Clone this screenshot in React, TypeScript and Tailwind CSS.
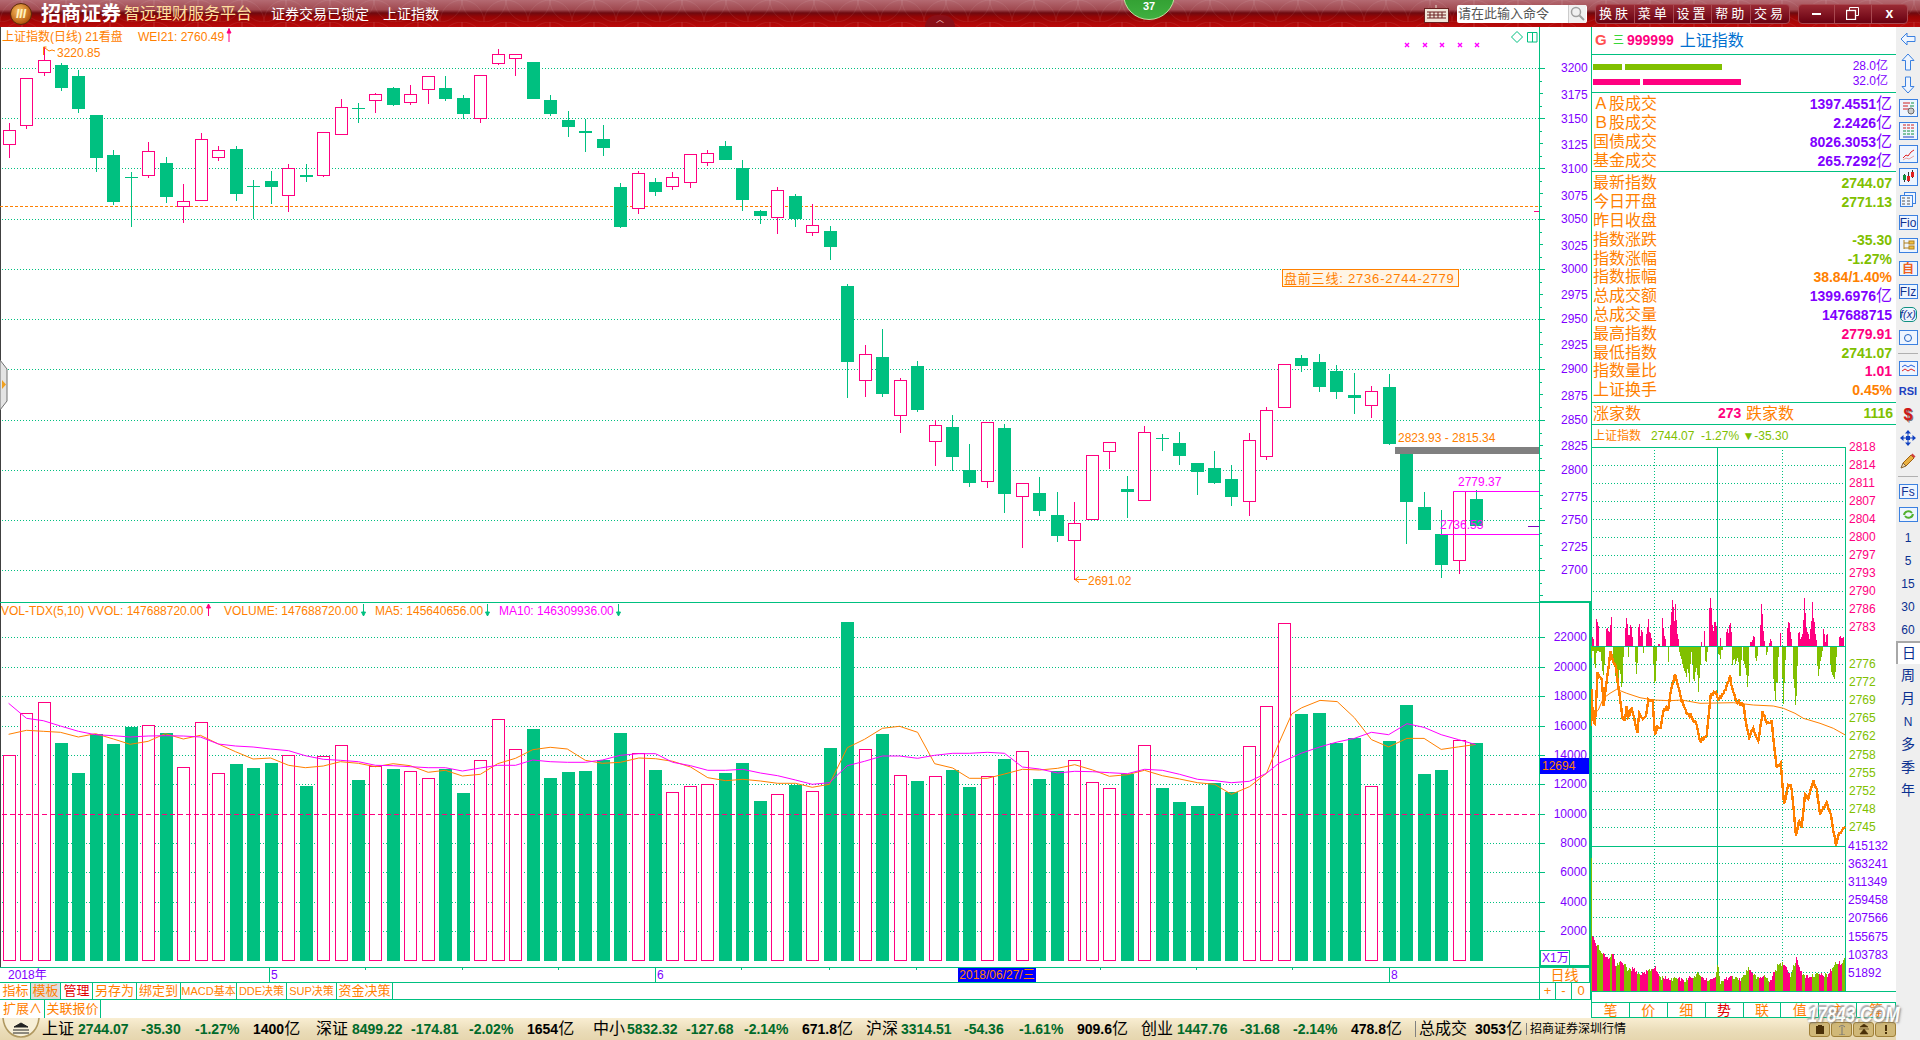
import React from 'react';

const GREEN = '#00c080';
const PINK = '#ff0080';
const ORANGE = '#ff8000';
const PURPLE = '#8000ff';
const MAGENTA = '#ff00ff';
const OLIVE = '#80c000';

type Raw = [number, number, number, number, number];

// up?, high, body top, body bottom, low (raw values are crop coordinates)
const seg1: Raw[] = [
  [1, 370, 391, 431, 473], [1, 235, 235, 374, 387], [1, 140, 181, 215, 228], [0, 190, 195, 264, 272],
  [0, 210, 228, 327, 338], [0, 345, 345, 474, 515], [0, 450, 465, 606, 614], [0, 517, 531, 534, 680],
  [1, 426, 454, 524, 533], [0, 471, 489, 591, 608], [1, 552, 604, 618, 668], [1, 399, 418, 599, 599],
  [1, 438, 451, 470, 482], [0, 438, 447, 582, 602], [0, 541, 558, 561, 657], [0, 513, 543, 561, 612],
  [1, 492, 505, 584, 635], [0, 492, 525, 531, 545], [1, 397, 397, 524, 530], [1, 297, 322, 401, 401],
  [0, 310, 324, 327, 368], [1, 279, 283, 299, 339], [0, 262, 264, 315, 317], [1, 255, 283, 305, 315],
  [1, 229, 229, 266, 312], [0, 228, 264, 297, 303], [0, 285, 294, 342, 358], [1, 226, 226, 353, 369],
  [1, 147, 163, 188, 194], [1, 163, 163, 173, 228], [0, 186, 186, 297, 297], [0, 285, 300, 342, 348],
  [0, 333, 360, 381, 411], [0, 357, 393, 398, 456], [0, 375, 417, 444, 468], [0, 549, 561, 681, 683],
  [1, 514, 519, 624, 642],
];
const seg2: Raw[] = [
  [0, 178, 182, 192, 196], [1, 172, 177, 186, 190], [1, 154, 154, 182, 188], [1, 150, 153, 162, 166],
  [0, 141, 146, 160, 160], [0, 160, 168, 200, 211], [0, 210, 211, 216, 224], [1, 187, 190, 217, 234],
  [0, 194, 196, 219, 227], [1, 204, 225, 232, 236],
];
const seg3: Raw[] = [
  [0, -12, 3, 50, 90], [0, 162, 168, 396, 503], [1, 345, 373, 449, 500], [0, 297, 381, 492, 500],
  [1, 444, 451, 554, 608], [0, 393, 408, 540, 546], [1, 570, 586, 632, 708], [0, 555, 591, 681, 722],
  [0, 642, 720, 759, 771], [1, 577, 577, 752, 774], [0, 582, 594, 792, 849], [1, 760, 760, 797, 954],
  [0, 741, 789, 843, 858], [0, 786, 855, 918, 936], [1, 816, 880, 929, 1050], [1, 676, 676, 866, 866],
  [1, 637, 637, 662, 717], [0, 738, 777, 786, 864], [1, 588, 607, 809, 809], [0, 612, 624, 627, 663],
  [0, 606, 639, 678, 705], [0, 699, 699, 726, 795], [0, 663, 714, 759, 762], [0, 705, 747, 801, 828],
  [1, 609, 631, 812, 858], [1, 531, 541, 677, 690], [1, 403, 403, 532, 532],
];
const seg4: Raw[] = [
  [0, 355, 358, 366, 372], [0, 354, 362, 387, 392], [0, 365, 371, 392, 399], [0, 373, 395, 398, 414],
  [1, 386, 391, 405, 418], [0, 374, 387, 444, 445], [0, 452, 452, 502, 544], [0, 492, 507, 530, 530],
  [0, 510, 534, 565, 578], [1, 491, 491, 560, 574], [0, 490, 499, 526, 526],
];
const candles: Raw[] = [
  ...seg1.map((c): Raw => [c[0], c[1] / 3, c[2] / 3, c[3] / 3, c[4] / 3]),
  ...seg2,
  ...seg3.map((c): Raw => [c[0], 230 + c[1] / 3, 230 + c[2] / 3, 230 + c[3] / 3, 230 + c[4] / 3]),
  ...seg4,
];
const cx = (i: number) => Math.round(8.6 + 17.47 * i);

const volA = [496, 370, 337, 459, 549, 432, 462, 411, 406, 429, 532, 397, 550, 522, 534, 519, 496, 588, 499, 466, 570, 527, 537, 544, 565, 537, 609, 511, 388, 478, 417, 564, 546, 543, 510, 429, 490];
const volB = [510, 577, 559, 553, 519, 489, 603, 583, 555, 574, 444, 66, 448, 402, 526, 543, 529, 510, 561, 529, 477, 454, 537, 513, 481, 547, 565, 522, 436, 564, 606, 618, 549, 576, 439, 319, 70];
const volC = [714, 713, 743, 738, 786, 741, 705, 774, 770, 740, 743];
const volTops = [...volA.map((y) => 590 + y / 3), ...volB.map((y) => 600 + y / 3), ...volC];

const pts = (a: number[], ox: number, oy: number) => {
  const out: string[] = [];
  for (let k = 0; k < a.length; k += 2) out.push(`${(ox + a[k] / 2.45).toFixed(1)},${(oy + a[k + 1] / 3).toFixed(1)}`);
  return out.join(' ');
};
const over = (a: number[]) => {
  const out: string[] = [];
  for (let k = 0; k < a.length; k += 2) out.push(`${(a[k] * 1.2245).toFixed(1)},${(a[k + 1] * 1.2245).toFixed(1)}`);
  return out.join(' ');
};

const ma5 = [
  pts([21, 433, 65, 421, 106, 424, 148, 427, 192, 441, 234, 431, 278, 447, 319, 463, 363, 454, 405, 431, 449, 447, 491, 436, 535, 462, 577, 485, 620, 507, 663, 504, 707, 526, 748, 533, 792, 528, 834, 515, 878, 520, 920, 530, 963, 521, 1005, 527, 1049, 547, 1091, 541, 1133, 558, 1177, 553, 1219, 521, 1263, 505, 1305, 479, 1348, 472, 1390, 477, 1434, 511, 1476, 520, 1520, 517, 1565, 504], 0, 590),
  pts([38, 476, 80, 484, 124, 501, 166, 533, 210, 542, 252, 538, 295, 543, 337, 550, 381, 550, 422, 562, 464, 553, 508, 443, 550, 418, 594, 385, 636, 379, 680, 397, 722, 491, 766, 504, 807, 535, 851, 535, 893, 522, 937, 508, 979, 510, 1023, 505, 1065, 494, 1109, 510, 1150, 529, 1194, 524, 1236, 511, 1280, 527, 1322, 537, 1366, 548, 1408, 553, 1449, 583, 1493, 560, 1535, 520, 1565, 430], 640, 600),
  over([1055, 583, 1063, 578, 1078, 572, 1092, 573, 1106, 586, 1120, 604, 1134, 610, 1149, 603, 1163, 603, 1177, 612, 1191, 610, 1205, 608]),
].join(' ');
const ma10 = [
  pts([21, 340, 65, 385, 106, 392, 148, 408, 192, 424, 234, 434, 278, 437, 319, 441, 363, 438, 405, 437, 449, 438, 491, 441, 535, 462, 577, 468, 620, 471, 663, 477, 707, 482, 748, 497, 792, 508, 834, 511, 878, 515, 920, 526, 963, 527, 1005, 530, 1049, 533, 1091, 533, 1133, 543, 1177, 534, 1219, 526, 1263, 526, 1305, 510, 1348, 515, 1390, 517, 1434, 517, 1476, 510, 1520, 496, 1565, 491], 0, 590),
  pts([38, 461, 80, 487, 124, 497, 166, 511, 210, 511, 252, 508, 295, 519, 337, 527, 381, 540, 422, 553, 464, 548, 508, 497, 550, 484, 594, 468, 636, 468, 680, 475, 722, 466, 766, 460, 807, 460, 851, 457, 893, 460, 937, 501, 979, 507, 1023, 519, 1065, 514, 1109, 515, 1150, 518, 1194, 521, 1236, 508, 1280, 511, 1322, 523, 1366, 538, 1408, 542, 1449, 548, 1493, 544, 1535, 520, 1565, 490], 640, 600),
  over([1063, 615, 1078, 610, 1092, 606, 1106, 603, 1120, 598, 1134, 600, 1149, 591, 1163, 594, 1177, 600, 1191, 604, 1205, 608]),
].join(' ');

const priceLabels: [string, number][] = [
  ['3200', 68], ['3175', 95], ['3150', 119], ['3125', 145], ['3100', 169], ['3075', 196], ['3050', 219], ['3025', 246], ['3000', 269],
  ['2975', 295], ['2950', 319], ['2925', 345], ['2900', 369], ['2875', 396], ['2850', 420], ['2825', 446], ['2800', 470], ['2775', 497],
  ['2750', 520], ['2725', 547], ['2700', 570],
];
const mainGrid = [68, 118, 168, 219, 269, 319, 369, 420, 470, 520, 570];
const volGrid: [string, number][] = [
  ['22000', 637], ['20000', 667], ['18000', 696], ['16000', 726], ['14000', 755], ['12000', 784], ['10000', 814],
  ['8000', 843], ['6000', 872], ['4000', 902], ['2000', 931],
];

const MainChart = () => (
  <div className="relative h-[576px] w-[1591px] shrink-0">
    <svg viewBox="0 27 1591 576" width={1591} height={576} className="block" shapeRendering="crispEdges" fontSize={12}>
      <line x1={0.5} y1={27} x2={0.5} y2={603} stroke="#404040" />
      {mainGrid.map((y) => (
        <line key={y} x1={2} y1={y + 0.5} x2={1539} y2={y + 0.5} stroke={GREEN} strokeDasharray="1 2" />
      ))}
      <line x1={0} y1={206.5} x2={1539} y2={206.5} stroke={ORANGE} strokeDasharray="3 2" />
      <line x1={1534} y1={211.5} x2={1539} y2={211.5} stroke={PINK} />
      {candles.map((c, i) => {
        const x = cx(i);
        const color = c[0] ? PINK : GREEN;
        const top = Math.round(c[2]);
        const bot = Math.round(c[3]);
        return (
          <g key={i}>
            <line x1={x + 0.5} y1={c[1]} x2={x + 0.5} y2={c[4]} stroke={color} />
            {c[0] ? (
              <rect x={x - 6 + 0.5} y={top + 0.5} width={12} height={bot - top} fill="#fff" stroke={color} />
            ) : (
              <rect x={x - 6} y={top} width={13} height={Math.max(bot - top, 1)} fill={color} />
            )}
          </g>
        );
      })}
      <rect x={1395} y={447} width={144} height={7} fill="#808080" />
      <line x1={1453} y1={491.5} x2={1539} y2={491.5} stroke={MAGENTA} />
      <line x1={1440} y1={534.5} x2={1539} y2={534.5} stroke={MAGENTA} />
      <line x1={1528} y1={526.5} x2={1539} y2={526.5} stroke="#8000c0" />
      <line x1={1539.5} y1={27} x2={1539.5} y2={603} stroke={GREEN} />
      <line x1={0} y1={602.5} x2={1539} y2={602.5} stroke={GREEN} />
      <rect x={1539} y={601} width={52} height={3} fill={GREEN} />
      {mainGrid.map((y) => (
        <g key={y}>
          <line x1={1539} y1={y + 0.5} x2={1545} y2={y + 0.5} stroke={GREEN} />
          <line x1={1539} y1={y + 13.5} x2={1542} y2={y + 13.5} stroke={GREEN} />
          <line x1={1539} y1={y + 25.5} x2={1543} y2={y + 25.5} stroke={GREEN} />
          <line x1={1539} y1={y + 38.5} x2={1542} y2={y + 38.5} stroke={GREEN} />
        </g>
      ))}
      <g shapeRendering="auto">
        {priceLabels.map(([t, y]) => (
          <text key={t} x={1561} y={y + 4} fill={PURPLE}>{t}</text>
        ))}
        <text x={2} y={41} fill={ORANGE}>上证指数(日线) 21看盘</text>
        <text x={138} y={41} fill={ORANGE}>WEI21: 2760.49</text>
        <path d="M229 28v14M227 33l2-4 2 4z" stroke={PINK} fill={PINK} />
        <path d="M43.5 55v-8h3M45 48l4 3 3-1 3 1" stroke={ORANGE} fill="none" />
        <text x={57} y={57} fill={ORANGE}>3220.85</text>
        {[1407, 1425, 1442, 1460, 1477].map((x) => (
          <path key={x} d={`M${x - 2} 43l4 4M${x + 2} 43l-4 4`} stroke={MAGENTA} strokeWidth={1.4} />
        ))}
        <path d="M1517 31.5l5.5 5.5-5.5 5.5-5.5-5.5z" fill="none" stroke={GREEN} />
        <path d="M1527.5 32.5h9.5v9.5h-9.5zM1532.5 32.5v9.5" fill="none" stroke={GREEN} />
        <rect x={1282.5} y={269.5} width={176} height={17} fill="#fff5e6" stroke={ORANGE} />
        <text x={1284} y={283} fill={ORANGE} fontSize={13} letterSpacing={0.8}>盘前三线: 2736-2744-2779</text>
        <text x={1398} y={442} fill={ORANGE}>2823.93 - 2815.34</text>
        <text x={1458} y={486} fill={MAGENTA}>2779.37</text>
        <text x={1440} y={529} fill={MAGENTA}>2736.53</text>
        <path d="M1075 579.5h12M1075 579.5l4-3M1075 579.5l4 3" stroke={ORANGE} fill="none" />
        <text x={1088} y={585} fill={ORANGE}>2691.02</text>
        <path d="M0 360l7 9v32l-7 9z" fill="#e4e4e4" stroke="#707070" />
        <path d="M2 380l4 4.500-4 4.500z" fill="#f0a020" />
      </g>
    </svg>
  </div>
);

const VolChart = () => (
  <div className="relative h-[364px] w-[1591px] shrink-0">
    <svg viewBox="0 603 1591 364" width={1591} height={364} className="block" shapeRendering="crispEdges" fontSize={12}>
      <line x1={0.5} y1={603} x2={0.5} y2={967} stroke="#404040" />
      {volGrid.map(([t, y]) =>
        y === 814 ? (
          <line key={t} x1={2} y1={y + 0.5} x2={1539} y2={y + 0.5} stroke={PINK} strokeDasharray="5 3" />
        ) : (
          <line key={t} x1={2} y1={y + 0.5} x2={1539} y2={y + 0.5} stroke={GREEN} strokeDasharray="1 2" />
        ),
      )}
      {volTops.map((t, i) => {
        const x = cx(i);
        const top = Math.round(t);
        return candles[i][0] ? (
          <rect key={i} x={x - 6 + 0.5} y={top + 0.5} width={12} height={960 - top} fill="#fff" stroke={PINK} />
        ) : (
          <rect key={i} x={x - 6} y={top} width={13} height={961 - top} fill={GREEN} />
        );
      })}
      <line x1={2} y1={814.5} x2={1539} y2={814.5} stroke={PINK} strokeDasharray="5 3" />
      <g shapeRendering="auto" fill="none">
        <polyline points={ma5} stroke={ORANGE} />
        <polyline points={ma10} stroke={MAGENTA} />
      </g>
      <line x1={1539.5} y1={603} x2={1539.5} y2={967} stroke={GREEN} />
      <rect x={1589} y={603} width={2} height={364} fill={GREEN} />
      {volGrid.map(([t, y]) => (
        <line key={t} x1={1539} y1={y + 0.5} x2={1545} y2={y + 0.5} stroke={GREEN} />
      ))}
      <g shapeRendering="auto">
        {volGrid.map(([t, y]) => (
          <text key={t} x={1587} y={y + 4} textAnchor="end" fill={PURPLE}>{t}</text>
        ))}
        <text x={1} y={615} fill={ORANGE}>VOL-TDX(5,10)</text>
        <text x={88} y={615} fill={ORANGE}>VVOL: 147688720.00</text>
        <path d="M208.500 604v12M206.500 608l2-4 2 4z" stroke={PINK} fill={PINK} />
        <text x={224} y={615} fill={ORANGE}>VOLUME: 147688720.00</text>
        <path d="M363.500 604v12M361.500 612l2 4 2-4z" stroke={GREEN} fill={GREEN} />
        <text x={375} y={615} fill={ORANGE}>MA5: 145640656.00</text>
        <path d="M487.500 604v12M485.500 612l2 4 2-4z" stroke={GREEN} fill={GREEN} />
        <text x={499} y={615} fill={MAGENTA}>MA10: 146309936.00</text>
        <path d="M618.500 604v12M616.500 612l2 4 2-4z" stroke={GREEN} fill={GREEN} />
      </g>
      <rect x={1540} y={758} width={49} height={16} fill="#0000ff" />
      <text x={1542} y={770} fill={ORANGE} shapeRendering="auto">12694</text>
      <rect x={1540.5} y={950.5} width={29} height={15} fill="#fff" stroke={GREEN} />
      <text x={1542} y={962} fill={PURPLE} shapeRendering="auto">X1万</text>
      <rect x={1539} y={965} width={52} height={2} fill={GREEN} />
    </svg>
  </div>
);

const DateRow = () => (
  <div className="flex h-[16px] w-[1591px] shrink-0 border-t border-b border-[#00c080] text-[12px] leading-[14px]">
    <div className="relative w-[1540px] border-r border-[#00c080] text-[#8000ff]">
      <span className="absolute left-[8px] top-0">2018年</span>
      <span className="absolute left-[269px] top-0 h-full border-l border-[#00c080] pl-[1px]">5</span>
      <span className="absolute left-[655px] top-0 h-full border-l border-[#00c080] pl-[1px]">6</span>
      <span className="absolute left-[1389px] top-0 h-full border-l border-[#00c080] pl-[1px]">8</span>
      <span className="absolute left-[365px] top-0 h-[2px] w-px bg-[#00c080]" />
      <span className="absolute left-[462px] top-0 h-[2px] w-px bg-[#00c080]" />
      <span className="absolute left-[558px] top-0 h-[2px] w-px bg-[#00c080]" />
      <span className="absolute left-[741px] top-0 h-[2px] w-px bg-[#00c080]" />
      <span className="absolute left-[829px] top-0 h-[2px] w-px bg-[#00c080]" />
      <span className="absolute left-[916px] top-0 h-[2px] w-px bg-[#00c080]" />
      <span className="absolute left-[1100px] top-0 h-[2px] w-px bg-[#00c080]" />
      <span className="absolute left-[1196px] top-0 h-[2px] w-px bg-[#00c080]" />
      <span className="absolute left-[1292px] top-0 h-[2px] w-px bg-[#00c080]" />
      <span className="absolute left-[958px] top-0 flex h-full w-[78px] items-center justify-center bg-[#0000ff] text-[#ff8000]">2018/06/27/三</span>
    </div>
    <div className="flex w-[49px] items-center justify-center text-[14px] text-[#ff8000]">日线</div>
    <div className="w-[2px] bg-[#00c080]" />
  </div>
);

const tabs = [
  { t: '指标', c: 'w-[30px] text-[#ff8000]' },
  { t: '模板', c: 'w-[30px] bg-[#dedede] text-[#ff8000]' },
  { t: '管理', c: 'w-[32px] text-[#e00000]' },
  { t: '另存为', c: 'w-[44px] text-[#ff8000]' },
  { t: '绑定到', c: 'w-[44px] text-[#ff8000]' },
  { t: 'MACD基本', c: 'w-[56px] text-[#ff8000] text-[11px]' },
  { t: 'DDE决策', c: 'w-[50px] text-[#ff8000] text-[11px]' },
  { t: 'SUP决策', c: 'w-[50px] text-[#ff8000] text-[11px]' },
  { t: '资金决策', c: 'w-[56px] text-[#ff8000]' },
];

const TabRows = () => (
  <>
    <div className="flex h-[17px] w-[1591px] shrink-0 border-b border-[#00c080] text-[13px] leading-[16px]">
      <div className="w-px" />
      {tabs.map((b) => (
        <div key={b.t} className={`flex items-center justify-center whitespace-nowrap border-r border-[#00c080] ${b.c}`}>{b.t}</div>
      ))}
      <div className="flex-1 border-r border-[#00c080]" />
      <div className="flex w-[50px] text-[#ff8000]">
        <div className="flex w-[16px] items-center justify-center border-r border-[#00c080]">+</div>
        <div className="flex w-[16px] items-center justify-center border-r border-[#00c080]">-</div>
        <div className="flex w-[18px] items-center justify-center">0</div>
      </div>
      <div className="w-px bg-[#00c080]" />
    </div>
    <div className="flex h-[18px] w-[1591px] shrink-0 text-[13px] leading-[16px] text-[#ff8000]">
      <div className="w-px" />
      <div className="flex w-[44px] items-center justify-center border-r border-[#00c080]">扩展∧</div>
      <div className="flex w-[56px] items-center justify-center border-r border-[#00c080]">关联报价</div>
    </div>
  </>
);

const Row = ({ label, value, c, yi }: { label: string; value: string; c?: string; yi?: boolean }) => (
  <div className="flex h-[18.8px] items-center justify-between whitespace-nowrap pr-[4px]">
    <span className="text-[16px] leading-none text-[#ff8000]">{label}</span>
    <span className={`text-[14px] leading-none font-bold ${c}`}>
      {value}
      {yi && <span className="text-[16px] font-normal">亿</span>}
    </span>
  </div>
);

// intraday bars in crop coordinates
const pinkAreas = [
  [97, 528, 101, 540], [108, 480, 111, 472, 114, 500, 117, 495], [138, 510, 143, 505, 148, 520, 152, 490, 154, 450, 156, 520],
  [196, 510, 198, 490, 201, 460, 204, 520, 208, 530, 212, 490, 216, 510, 218, 540], [233, 520, 238, 480, 241, 530, 245, 508, 249, 520],
  [258, 530, 262, 510, 265, 465, 268, 515, 272, 520, 276, 545], [295, 552, 300, 552], [305, 500, 308, 470, 312, 525, 318, 540],
  [329, 520, 333, 480, 337, 420, 340, 425, 343, 500, 346, 420, 349, 470, 352, 520, 357, 545], [424, 545, 426, 545], [432, 513, 434, 513],
  [447, 470, 450, 420, 453, 408, 456, 480, 460, 520, 464, 480, 468, 490, 472, 510], [480, 533, 482, 533],
  [497, 530, 502, 505, 506, 520, 510, 480, 513, 500, 517, 540], [570, 540, 573, 550, 578, 540, 582, 520, 586, 545],
  [600, 530, 603, 460, 605, 420, 608, 470, 612, 540, 616, 550], [628, 550, 632, 535, 636, 550], [660, 518, 662, 518],
  [680, 530, 684, 490, 688, 483, 691, 510, 695, 540],
  [715, 520, 718, 510, 722, 540, 728, 520, 731, 470, 734, 402, 737, 470, 740, 510, 745, 520, 749, 540, 752, 500, 755, 480, 757, 415, 760, 470, 764, 490, 767, 530, 771, 545],
  [790, 507, 793, 507, 795, 555, 800, 520, 802, 512, 805, 555], [838, 530, 842, 528, 846, 540, 850, 528, 853, 545],
];
const greenAreas = [
  [93, 605, 97, 575, 100, 565, 104, 620, 107, 625, 110, 570, 117, 575, 122, 575, 126, 620, 130, 650, 134, 610, 136, 565],
  [160, 600, 164, 625, 168, 660, 172, 680, 176, 650, 180, 620, 184, 680, 187, 690, 190, 600, 192, 565], [204, 590, 206, 590], [218, 590, 220, 590],
  [225, 590, 228, 620, 230, 648, 233, 600], [250, 580, 252, 580], [280, 600, 283, 660, 285, 685, 288, 640, 291, 565], [296, 590, 298, 590],
  [305, 590, 307, 590], [324, 605, 326, 605],
  [358, 575, 365, 600, 372, 630, 376, 635, 380, 655, 384, 610, 388, 680, 391, 620, 395, 570, 398, 620, 402, 680, 406, 640, 410, 620, 414, 660, 416, 710, 419, 640, 424, 590],
  [436, 600, 439, 612, 443, 570], [473, 600, 477, 570, 481, 605, 484, 570, 490, 570], [517, 620, 522, 590, 527, 615, 532, 590, 536, 610, 540, 670, 544, 610, 547, 570],
  [550, 600, 556, 620, 560, 650, 564, 698, 567, 600], [585, 590, 590, 605, 595, 570], [618, 590, 624, 570], [640, 650, 644, 700, 647, 730, 650, 650, 653, 675, 656, 570],
  [665, 620, 668, 660, 671, 750, 674, 650, 678, 570], [700, 650, 704, 690, 707, 745, 710, 700, 714, 570], [772, 610, 776, 655, 780, 610, 785, 590, 789, 565],
  [810, 600, 815, 640, 820, 650, 825, 660, 829, 600, 832, 565],
];
const zx = (x: number) => 1560 + x / 3;
const zy = (y: number) => 460 + y / 3;
const areaPath = (a: number[]) => {
  let d = `M${zx(a[0]).toFixed(1)} 646`;
  for (let k = 0; k < a.length; k += 2) d += `L${zx(a[k]).toFixed(1)} ${zy(a[k + 1]).toFixed(1)}`;
  return `${d}L${zx(a[a.length - 2]).toFixed(1)} 646Z`;
};
const linePts = (a: number[]) => {
  const o: string[] = [];
  for (let k = 0; k < a.length; k += 2) o.push(`${zx(a[k]).toFixed(1)},${zy(a[k + 1]).toFixed(1)}`);
  return o.join(' ');
};
// the price line is jagged in the picture, add a small fixed jitter
const jagged = (a: number[]) => {
  const o: number[] = [];
  let seed = 777;
  for (let k = 0; k < a.length - 2; k += 2) {
    const n = Math.max(1, Math.floor((a[k + 2] - a[k]) / 3));
    for (let j = 0; j < n; j++) {
      seed = (seed * 1103515245 + 12345) & 0x7fffffff;
      const t = j / n;
      o.push(a[k] + t * (a[k + 2] - a[k]), a[k + 1] + t * (a[k + 3] - a[k + 1]) + (seed / 0x7fffffff - 0.5) * 10);
    }
  }
  o.push(a[a.length - 2], a[a.length - 1]);
  return linePts(o);
};
const priceLine = jagged([
  91, 805, 94, 690, 99, 780, 105, 790, 113, 635, 120, 650, 125, 655, 131, 735, 140, 660, 152, 575, 160, 610, 168, 620, 178, 700, 188, 775, 195, 780, 200, 742,
  205, 775, 215, 742, 222, 775, 232, 820, 238, 760, 248, 775, 258, 770, 265, 722, 278, 725, 285, 825, 292, 800, 302, 805, 310, 750, 325, 745, 335, 680, 345, 645,
  355, 680, 365, 720, 380, 760, 395, 770, 410, 795, 420, 848, 440, 825, 452, 705, 468, 692, 475, 720, 490, 703, 510, 650, 518, 690, 530, 725, 550, 735, 560, 800,
  568, 830, 580, 805, 595, 840, 608, 755, 620, 790, 635, 785, 642, 850, 650, 920, 662, 910, 672, 1035, 685, 975, 695, 985, 708, 1130, 715, 1085, 725, 1095, 735, 1005,
  745, 1015, 760, 965, 770, 990, 780, 1060, 800, 1030, 815, 1075, 820, 1110, 828, 1152, 840, 1115, 856, 1105,
]);
const avgLine = linePts([93, 770, 115, 750, 130, 715, 150, 700, 170, 688, 200, 700, 240, 713, 280, 720, 330, 722, 365, 720, 420, 730, 520, 728, 580, 735, 640, 738, 670, 745, 705, 760, 730, 775, 780, 790, 820, 805, 856, 825]);

const envelope = [93, 115, 96, 348, 110, 365, 125, 390, 140, 410, 157, 390, 165, 425, 190, 420, 200, 440, 220, 440, 240, 460, 283, 435, 300, 465, 330, 470, 350, 465, 370, 475, 415, 455, 440, 475, 465, 470, 472, 418, 480, 480, 515, 465, 545, 470, 565, 435, 590, 470, 610, 460, 630, 475, 652, 430, 672, 420, 690, 460, 708, 410, 730, 462, 770, 458, 800, 460, 825, 425, 850, 418, 856, 380];
const intradayVol = (() => {
  const out: { x: number; y: number; c: string }[] = [];
  let seed = 12345;
  let green = true;
  let run = 0;
  const rnd = () => {
    seed = (seed * 1103515245 + 12345) & 0x7fffffff;
    return seed / 0x7fffffff;
  };
  for (let raw = 93; raw <= 856; raw += 3) {
    let k = 0;
    while (k < envelope.length - 4 && envelope[k + 2] < raw) k += 2;
    const t = Math.min(1, Math.max(0, (raw - envelope[k]) / (envelope[k + 2] - envelope[k])));
    const y = envelope[k + 1] + t * (envelope[k + 3] - envelope[k + 1]) + (raw < 100 ? 0 : rnd() * 14);
    if (run <= 0) {
      green = !green;
      run = 2 + Math.floor(rnd() * 7);
    }
    run--;
    out.push({ x: Math.round(zx(raw)), y: 820 + y / 3, c: raw < 96 || green ? OLIVE : PINK });
  }
  return out;
})();

const upLabels: [string, number][] = [['2818', 447], ['2814', 465], ['2811', 483], ['2807', 501], ['2804', 519], ['2800', 537], ['2797', 555], ['2793', 573], ['2790', 591], ['2786', 609], ['2783', 627]];
const dnLabels: [string, number][] = [['2776', 664], ['2772', 682], ['2769', 700], ['2765', 718], ['2762', 736], ['2758', 755], ['2755', 773], ['2752', 791], ['2748', 809], ['2745', 827]];
const vLabels: [string, number][] = [['415132', 846], ['363241', 864], ['311349', 882], ['259458', 900], ['207566', 918], ['155675', 937], ['103783', 955], ['51892', 973]];

const IntradayChart = () => (
  <svg viewBox="1592 447 304 545" width={304} height={545} className="block shrink-0 overflow-visible" shapeRendering="crispEdges" fontSize={12}>
    <line x1={1592} y1={447.5} x2={1846} y2={447.5} stroke={GREEN} />
    {[...upLabels.slice(1), ...dnLabels].map(([t, y]) => (
      <line key={t} x1={1593} y1={y + 0.5} x2={1845} y2={y + 0.5} stroke={GREEN} strokeDasharray="1 2" />
    ))}
    {vLabels.slice(1).map(([t, y]) => (
      <line key={t} x1={1593} y1={y - 0.5} x2={1845} y2={y - 0.5} stroke={GREEN} strokeDasharray="1 2" />
    ))}
    {[1654, 1782].map((x) => (
      <line key={x} x1={x + 0.5} y1={447} x2={x + 0.5} y2={991} stroke={GREEN} strokeDasharray="1 2" />
    ))}
    <line x1={1717.5} y1={447} x2={1717.5} y2={991} stroke={GREEN} />
    {pinkAreas.map((a, i) => <path key={i} d={areaPath(a)} fill={PINK} />)}
    {greenAreas.map((a, i) => <path key={i} d={areaPath(a)} fill={OLIVE} />)}
    {intradayVol.map((b, i) => <rect key={i} x={b.x} y={b.y} width={1} height={991 - b.y} fill={b.c} />)}
    <line x1={1592} y1={646.5} x2={1846} y2={646.5} stroke={GREEN} />
    <line x1={1592} y1={846.5} x2={1846} y2={846.5} stroke={GREEN} />
    <line x1={1592} y1={991.5} x2={1896} y2={991.5} stroke={GREEN} />
    <line x1={1845.5} y1={447} x2={1845.5} y2={991} stroke={GREEN} />
    <polyline points={avgLine} fill="none" stroke={ORANGE} strokeWidth={1} shapeRendering="auto" />
    <polyline points={priceLine} fill="none" stroke={ORANGE} strokeWidth={2.4} />
    <g shapeRendering="auto">
      {upLabels.map(([t, y]) => <text key={t} x={1849} y={y + 4} fill={PINK}>{t}</text>)}
      {dnLabels.map(([t, y]) => <text key={t} x={1849} y={y + 4} fill={OLIVE}>{t}</text>)}
      {vLabels.map(([t, y]) => <text key={t} x={1848} y={y + 4} fill={PURPLE}>{t}</text>)}
    </g>
  </svg>
);

const RightPanel = () => (
  <div className="flex w-[305px] shrink-0 flex-col border-l border-[#00c080] text-[#ff8000]">
    <div className="flex h-[28px] shrink-0 items-center gap-[6px] border-b border-[#00c080] pl-[3px] whitespace-nowrap">
      <span className="w-[12px] text-[15px] font-bold text-[#ff5050]">G</span>
      <span className="w-[8px] text-[11px] leading-none text-[#00d000]">三</span>
      <span className="text-[14px] font-bold text-[#ff0080]">999999</span>
      <span className="text-[16px] leading-none text-[#0070d0]">上证指数</span>
    </div>
    <div className="relative flex h-[38px] shrink-0 flex-col gap-[9px] border-b border-[#00c080] pt-[9px] pl-[1px]">
      <div className="flex h-[6px] gap-[3px]">
        <div className="w-[29px] bg-[#80c000]" />
        <div className="w-[97px] bg-[#80c000]" />
      </div>
      <div className="flex h-[6px] gap-[3px]">
        <div className="w-[47px] bg-[#ff0080]" />
        <div className="w-[98px] bg-[#ff0080]" />
      </div>
      <div className="absolute right-[8px] top-[4px] flex flex-col items-end text-[12px] leading-[15px] text-[#8000ff]">
        <span>28.0亿</span>
        <span>32.0亿</span>
      </div>
    </div>
    <div className="h-[79px] shrink-0 border-b border-[#00c080] pt-[1px] pl-[1px]">
      <div className="[&>div]:h-[19px]">
        <Row label="Ａ股成交" value="1397.4551" c="text-[#8000ff]" yi />
        <Row label="Ｂ股成交" value="2.2426" c="text-[#8000ff]" yi />
        <Row label="国债成交" value="8026.3053" c="text-[#8000ff]" yi />
        <Row label="基金成交" value="265.7292" c="text-[#8000ff]" yi />
      </div>
    </div>
    <div className="h-[231px] shrink-0 border-b border-[#00c080] pt-[2px] pl-[1px]">
      <Row label="最新指数" value="2744.07" c="text-[#80c000]" />
      <Row label="今日开盘" value="2771.13" c="text-[#80c000]" />
      <Row label="昨日收盘" value="" />
      <Row label="指数涨跌" value="-35.30" c="text-[#80c000]" />
      <Row label="指数涨幅" value="-1.27%" c="text-[#80c000]" />
      <Row label="指数振幅" value="38.84/1.40%" c="text-[#ff8000]" />
      <Row label="总成交额" value="1399.6976" c="text-[#8000ff]" yi />
      <Row label="总成交量" value="147688715" c="text-[#8000ff]" />
      <Row label="最高指数" value="2779.91" c="text-[#ff0080]" />
      <Row label="最低指数" value="2741.07" c="text-[#80c000]" />
      <Row label="指数量比" value="1.01" c="text-[#ff0080]" />
      <Row label="上证换手" value="0.45%" c="text-[#ff8000]" />
    </div>
    <div className="flex h-[22px] shrink-0 items-center border-b border-[#00c080] pl-[1px] whitespace-nowrap">
      <span className="w-[125px] text-[16px] leading-none">涨家数</span>
      <span className="w-[28px] text-[14px] font-bold text-[#ff0080]">273</span>
      <span className="text-[16px] leading-none">跌家数</span>
      <span className="flex-1 pr-[3px] text-right text-[14px] font-bold text-[#80c000]">1116</span>
    </div>
    <div className="flex h-[22px] shrink-0 items-center pl-[1px] text-[12px] whitespace-nowrap">
      <span className="w-[58px] leading-none">上证指数</span>
      <span className="text-[#80c000]">2744.07&nbsp; -1.27% ▼-35.30</span>
    </div>
    <IntradayChart />
    <div className="h-[10px] shrink-0" />
    <div className="grid h-[16px] shrink-0 grid-cols-8 border-t border-r border-b border-[#00c080] text-[14px] leading-[14px]">
      {['笔', '价', '细', '势', '联', '值', '主', '筹'].map((t) => (
        <div key={t} className={`flex items-center justify-center border-r border-[#00c080] last:border-r-0 ${t === '势' ? 'text-[#e00000]' : ''}`}>{t}</div>
      ))}
    </div>
  </div>
);

const cells = [
  { t: '上证', c: 'w-[36px] text-[16px] font-normal text-black' },
  { t: '2744.07', c: 'w-[63px] text-[#006a2a]' },
  { t: '-35.30', c: 'w-[54px] text-[#006a2a]' },
  { t: '-1.27%', c: 'w-[58px] text-[#006a2a]' },
  { t: '1400', y: 1, c: 'w-[63px] text-black' },
  { t: '深证', c: 'w-[36px] text-[16px] font-normal text-black' },
  { t: '8499.22', c: 'w-[59px] text-[#006a2a]' },
  { t: '-174.81', c: 'w-[58px] text-[#006a2a]' },
  { t: '-2.02%', c: 'w-[58px] text-[#006a2a]' },
  { t: '1654', y: 1, c: 'w-[66px] text-black' },
  { t: '中小', c: 'w-[34px] text-[16px] font-normal text-black' },
  { t: '5832.32', c: 'w-[59px] text-[#006a2a]' },
  { t: '-127.68', c: 'w-[58px] text-[#006a2a]' },
  { t: '-2.14%', c: 'w-[58px] text-[#006a2a]' },
  { t: '671.8', y: 1, c: 'w-[64px] text-black' },
  { t: '沪深', c: 'w-[35px] text-[16px] font-normal text-black' },
  { t: '3314.51', c: 'w-[63px] text-[#006a2a]' },
  { t: '-54.36', c: 'w-[55px] text-[#006a2a]' },
  { t: '-1.61%', c: 'w-[58px] text-[#006a2a]' },
  { t: '909.6', y: 1, c: 'w-[64px] text-black' },
  { t: '创业', c: 'w-[36px] text-[16px] font-normal text-black' },
  { t: '1447.76', c: 'w-[63px] text-[#006a2a]' },
  { t: '-31.68', c: 'w-[53px] text-[#006a2a]' },
  { t: '-2.14%', c: 'w-[58px] text-[#006a2a]' },
  { t: '478.8', y: 1, c: 'w-[64px] text-black' },
  { t: '总成交', c: 'w-[60px] border-l border-[#808080] pl-[3px] text-[16px] font-normal text-black' },
  { t: '3053', y: 1, c: 'w-[51px] text-black' },
];

const StatusBar = () => (
  <div className="relative flex h-[22px] shrink-0 items-center whitespace-nowrap bg-[linear-gradient(#f9eed2,#eadcb8_60%,#e6d6ae)] text-[14px] leading-none font-bold">
    <svg width={42} height={22} viewBox="0 0 42 22" className="shrink-0">
      <path d="M3 0c1 11 8 19 18 19S38 11 39 0" fill="#f7efd8" stroke="#b09860" strokeWidth={1.600} />
      <path d="M21 5l-7 4h14zM13 12h16M13 15h16" fill="#222" stroke="#222" />
    </svg>
    {cells.map((x, i) => (
      <span key={i} className={`shrink-0 ${x.c}`}>
        {x.t}
        {x.y && <span className="text-[16px] font-normal">亿</span>}
      </span>
    ))}
    <span className="shrink-0 border-l border-[#808080] pl-[3px] text-[12px] font-normal text-black">招商证券深圳行情</span>
    <div className="absolute right-0 top-[4px] flex gap-px">
      {[0, 1, 2, 3].map((i) => (
        <div key={i} className="flex h-[15px] w-[21px] items-center justify-center rounded-[3px] border border-[#a08038] bg-[#d0b878]">
          <svg width={12} height={11} viewBox="0 0 12 11">
            {i === 0 && <path d="M2 2h8v8H2zM4 1h4v2H4z" fill="#4a3008" />}
            {i === 1 && <path d="M6 3v8M3 11h6M3 3a4 4 0 0 1 6 0" stroke="#777" fill="none" />}
            {i === 2 && <path d="M6 0l4 3H2zM1 5h10M6 5l4 5H2z" fill="#4a3008" stroke="#4a3008" strokeWidth={0.6} />}
            {i === 3 && <path d="M5 1h2v6H5zM5 8h2v2H5z" fill="#4a3008" />}
          </svg>
        </div>
      ))}
    </div>
  </div>
);

const B = 'flex h-[15px] w-[19px] items-center justify-center border border-[#3b80e0] bg-[#eef5ff]';

const toolIcons: React.ReactNode[] = [
  <svg width={16} height={14} viewBox="0 0 16 14"><path d="M7 1L1 7l6 6V9.500h8v-5H7z" fill="#eef5ff" stroke="#3b80e0" /></svg>,
  <svg width={14} height={18} viewBox="0 0 14 18"><path d="M7 1L1 7.500h3.500V17h5V7.500H13z" fill="#eef5ff" stroke="#3b80e0" /></svg>,
  <svg width={14} height={18} viewBox="0 0 14 18"><path d="M7 17l6-6.500H9.500V1h-5v9.500H1z" fill="#eef5ff" stroke="#3b80e0" /></svg>,
  <div className={B + ' h-[18px] w-[15px]'}>
    <svg width={13} height={16} viewBox="0 0 13 16"><path d="M1 3h7M1 6h5M1 9h6" stroke="#d02020" /><path d="M9 3h3M8 6h4" stroke="#109040" /><circle cx={9} cy={11} r={3} fill="#ccc" stroke="#666" /></svg>
  </div>,
  <div className={B + ' h-[18px] w-[15px]'}>
    <svg width={13} height={16} viewBox="0 0 13 16"><path d="M1 2h3M5 2h3M9 2h3M1 5h3M5 5h3M9 5h3" stroke="#d02020" /><path d="M1 8h3M5 8h3M9 8h3M1 11h3M5 11h3M9 11h3" stroke="#109040" /><path d="M1 14h11" stroke="#2040c0" /></svg>
  </div>,
  <div className={B + ' h-[18px] w-[15px]'}>
    <svg width={13} height={16} viewBox="0 0 13 16"><path d="M1 12l3-3 2 1 3-4 3-2" fill="none" stroke="#e02020" /><path d="M1 14l3-2 3 1 5-3" fill="none" stroke="#e8a0a0" /></svg>
  </div>,
  <div className={B + ' h-[18px] w-[15px]'}>
    <svg width={13} height={16} viewBox="0 0 13 16"><path d="M2.500 5v8M6.500 3v10M10.500 1v8" stroke="#333" /><rect x={1} y={6} width={3} height={5} fill="#109040" /><rect x={5} y={7} width={3} height={5} fill="#e02020" /><rect x={9} y={3} width={3} height={5} fill="#e02020" /></svg>
  </div>,
  <svg width={16} height={16} viewBox="0 0 16 16"><rect x={4.500} y={0.500} width={11} height={11} fill="#eef5ff" stroke="#3b80e0" /><rect x={0.500} y={3.500} width={12} height={11} fill="#eef5ff" stroke="#3b80e0" /><path d="M2 6h3M7 6h3M2 9h3M7 9h3M2 12h3M7 12h3" stroke="#555" /></svg>,
  <div className={B + ' text-[12px] text-[#103090]'}>Fio</div>,
  <div className={B}>
    <svg width={15} height={13} viewBox="0 0 15 13"><path d="M3 1v9M3 4h5M3 9h5" stroke="#b08020" fill="none" /><rect x={8} y={2} width={5} height={3} fill="#f0c040" stroke="#b08020" /><rect x={8} y={7} width={5} height={3} fill="#f0c040" stroke="#b08020" /></svg>
  </div>,
  <div className={B + ' text-[12px] font-bold text-[#f06020]'}>自</div>,
  <div className={B + ' text-[12px] text-[#103090]'}>FIz</div>,
  <div className="flex h-[15px] w-[17px] items-center justify-center rounded-[5px] border border-[#109080] bg-[#eef5ff] text-[11px] text-[#103090] italic">f(x)</div>,
  <div className={B}><div className="h-[8px] w-[8px] rounded-full border border-[#2060c0]" /></div>,
];
const toolIcons2: React.ReactNode[] = [
  <div className={B}>
    <svg width={15} height={12} viewBox="0 0 15 12"><path d="M1 4l3-2 3 2 3-2 4 2" fill="none" stroke="#2060e0" /><path d="M1 8l3-2 3 2 3-2 4 2" fill="none" stroke="#e02020" /></svg>
  </div>,
  <span className="text-[11px] font-bold text-[#2040c0]">RSI</span>,
  <span className="text-[16px] leading-none font-bold text-[#d01818] [text-shadow:1px_1px_0_#777]">$</span>,
  <svg width={16} height={16} viewBox="0 0 16 16" fill="#1040c0"><path d="M8 0l3 3.500H5zM8 16l-3-3.500h6zM0 8l3.500-3v6zM16 8l-3.500 3V5z" /><rect x={6} y={6} width={4} height={4} /><path d="M8 3v10M3 8h10" stroke="#1040c0" /></svg>,
  <svg width={16} height={16} viewBox="0 0 16 16"><path d="M3 10l8-8 3 3-8 8z" fill="#e8b040" stroke="#a06010" /><path d="M11 2l1.500-1.500 3 3L14 5z" fill="#d04040" /><path d="M3 10l-2 5 5-2z" fill="#f0d8b0" stroke="#806030" /></svg>,
];
const toolIcons3: React.ReactNode[] = [
  <div className={B + ' text-[12px] text-[#103090]'}>Fs</div>,
  <div className={B}>
    <svg width={13} height={11} viewBox="0 0 13 11"><path d="M2 6a4.500 4.500 0 0 1 8-2M11 5a4.500 4.500 0 0 1-8 2" fill="none" stroke="#50b030" strokeWidth={2} /></svg>
  </div>,
];
const periods = ['1', '5', '15', '30', '60', '日', '周', '月', 'N', '多', '季', '年'];

const Toolbar = () => (
  <div className="flex w-[24px] shrink-0 flex-col items-stretch bg-[#efefef] text-[#0a3090]">
    {toolIcons.map((ic, i) => <div key={i} className="flex h-[23px] shrink-0 items-center justify-center">{ic}</div>)}
    <div className="flex h-[8px] shrink-0 items-center px-[2px]"><div className="h-px w-full bg-[#b0b0b0]" /></div>
    {toolIcons2.map((ic, i) => <div key={i} className="flex h-[23px] shrink-0 items-center justify-center">{ic}</div>)}
    <div className="flex h-[8px] shrink-0 items-center px-[2px]"><div className="h-px w-full bg-[#b0b0b0]" /></div>
    {toolIcons3.map((ic, i) => <div key={i} className="flex h-[23px] shrink-0 items-center justify-center">{ic}</div>)}
    {periods.map((t) => (
      <div key={t} className={`flex h-[23px] shrink-0 items-center justify-center ${t === '日' ? 'border-t-2 border-l-2 border-[#a8a8a8] bg-white text-[14px]' : /\d|N/.test(t) ? 'text-[12px]' : 'text-[14px]'}`}>{t}</div>
    ))}
  </div>
);

const HeaderBtn = ({ t }: { t: string }) => (
  <div className="flex h-full flex-1 items-center justify-center border-r border-[#a84850] tracking-[3px] last:border-r-0">{t}</div>
);

const Header = () => (
  <div className="relative flex h-[27px] shrink-0 items-center whitespace-nowrap bg-[linear-gradient(#b46a72,#a0484f_36%,#6e0a10_48%,#950505_62%,#bc0a0a)]">
    <svg className="absolute inset-0" width={1920} height={27}>
      <defs>
        <pattern id="scales" width={44} height={22} patternUnits="userSpaceOnUse">
          <circle cx={22} cy={22} r={22} fill="none" stroke="#ffffff" strokeOpacity={0.07} />
          <circle cx={0} cy={0} r={22} fill="none" stroke="#ffffff" strokeOpacity={0.07} />
          <circle cx={44} cy={0} r={22} fill="none" stroke="#ffffff" strokeOpacity={0.07} />
        </pattern>
      </defs>
      <rect width={1920} height={27} fill="url(#scales)" />
    </svg>
    <div className="relative ml-[10px] flex h-[22px] w-[22px] items-center justify-center rounded-full border border-[#5a2a08] bg-[radial-gradient(circle_at_40%_35%,#f8c060,#b85a10_70%,#5a2a08)] text-[12px] font-bold text-[#fff2c0] italic">III</div>
    <span className="relative ml-[9px] w-[83px] text-[20px] leading-none font-bold text-white">招商证券</span>
    <span className="relative w-[147px] text-[16px] leading-none text-[#ffe0a0]">智远理财服务平台</span>
    <span className="relative w-[112px] text-[14px] leading-none text-white">证券交易已锁定</span>
    <span className="relative text-[14px] leading-none text-white">上证指数</span>
    <div className="absolute left-[925px] top-[15px] flex h-[12px] w-[30px] items-start justify-center rounded-t-[14px] bg-[#8a1018] text-[8px] leading-[9px] text-[#f0c0c0]">︿</div>
    <div className="absolute left-[1123px] top-[-32px] flex h-[52px] w-[52px] items-end justify-center rounded-full border border-[#c0e0a0] bg-[linear-gradient(#208a20,#40b040)] pb-[7px] text-[11px] leading-none font-bold text-white">37</div>
    <div className="relative ml-auto flex h-full items-center">
      <svg width={25} height={18} viewBox="0 0 25 18" className="mr-[8px]">
        <path d="M12 3V0" stroke="#e8e0d0" />
        <rect x={0.500} y={3.500} width={24} height={14} fill="#f0e6d8" stroke="#6a2020" />
        <path d="M3 7h19M3 10h19M3 13h19M6 7v6M10 7v6M14 7v6M18 7v6" stroke="#6a2020" />
      </svg>
      <div className="flex h-[18px] w-[130px] items-center justify-between rounded-[2px] bg-white pr-[1px] pl-[1px] text-[13px] text-[#555]">
        <span>请在此输入命令</span>
        <div className="flex h-full w-[18px] items-center justify-center border-l border-[#ccc] bg-[#f0f0f0]">
          <svg width={15} height={15} viewBox="0 0 15 15"><circle cx={6} cy={6} r={4.500} fill="none" stroke="#a0a0a0" strokeWidth={1.500} /><path d="M9.500 9.500L14 14" stroke="#a0a0a0" strokeWidth={2} /></svg>
        </div>
      </div>
      <div className="ml-[8px] flex h-[20px] w-[195px] items-center rounded-[4px] border border-[#a84850] bg-[linear-gradient(#9a2a34,#680010)] text-[13px] text-white">
        {['换肤', '菜单', '设置', '帮助', '交易'].map((t) => <HeaderBtn key={t} t={t} />)}
      </div>
      <div className="mr-[12px] ml-[8px] flex h-[20px] w-[110px] items-center rounded-[4px] border border-[#a84850] bg-[linear-gradient(#9a2a34,#680010)] text-white">
        <div className="flex h-full flex-1 items-center justify-center border-r border-[#a84850]"><div className="h-[2px] w-[9px] bg-white" /></div>
        <div className="flex h-full flex-1 items-center justify-center border-r border-[#a84850]">
          <svg width={13} height={13} viewBox="0 0 13 13"><path d="M3.500 3.500v-3h9v8h-3" fill="none" stroke="#fff" /><rect x={0.500} y={3.500} width={9} height={9} fill="none" stroke="#fff" strokeWidth={1.300} /></svg>
        </div>
        <div className="flex h-full flex-1 items-center justify-center text-[14px] font-bold">x</div>
      </div>
    </div>
  </div>
);

export default function App() {
  return (
    <div className="relative flex h-[1040px] w-[1920px] flex-col overflow-hidden bg-white font-['Liberation_Sans','Noto_Sans_CJK_SC',sans-serif]">
      <Header />
      <div className="flex min-h-0 flex-1">
        <div className="flex w-[1896px] shrink-0 flex-col">
          <div className="flex h-[991px] shrink-0">
            <div className="flex w-[1591px] shrink-0 flex-col">
              <MainChart />
              <VolChart />
              <DateRow />
              <TabRows />
            </div>
            <RightPanel />
          </div>
          <StatusBar />
        </div>
        <Toolbar />
      </div>
      <div className="absolute left-[1808px] top-[1004px] origin-top-left scale-y-125 text-[17px] leading-none font-bold text-white italic opacity-90 [text-shadow:1px_1px_2px_#777,-1px_-1px_1px_#aaa]">17843.COM</div>
    </div>
  );
}
